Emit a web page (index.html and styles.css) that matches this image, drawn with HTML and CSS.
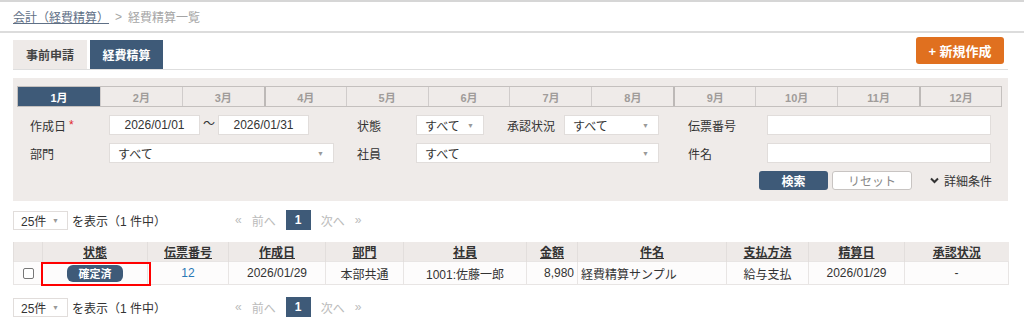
FILE: index.html
```html
<!DOCTYPE html>
<html lang="ja">

<head>
    <meta charset="utf-8">
    <link rel="stylesheet" href="styles.css">
</head>

<body>
    <div class="breadcrumb">
        <a class="crumb-link">会計（経費精算）</a>
        <span class="crumb-sep">&gt;</span>
        <span class="crumb-current">経費精算一覧</span>
    </div>

    <main class="page">
        <div class="tab-bar">
            <a class="tab">事前申請</a>
            <a class="tab active">経費精算</a>
            <a class="new-button">+ 新規作成</a>
        </div>

        <div class="search-panel">
            <div class="months">
                <span class="month active">1月</span>
                <span class="month">2月</span>
                <span class="month">3月</span>
                <span class="month thick">4月</span>
                <span class="month">5月</span>
                <span class="month">6月</span>
                <span class="month">7月</span>
                <span class="month">8月</span>
                <span class="month thick">9月</span>
                <span class="month">10月</span>
                <span class="month">11月</span>
                <span class="month thick">12月</span>
            </div>

            <div class="form-grid">
                <label class="label">作成日 <span class="required">*</span></label>
                <div class="date-range">
                    <span class="field date">2026/01/01</span>
                    <span class="tilde">〜</span>
                    <span class="field date">2026/01/31</span>
                </div>
                <span></span>
                <label class="label">状態</label>
                <div class="inline-fields">
                    <span class="field select status-select">すべて<i class="arrow">▼</i></span>
                    <label class="label approval-label">承認状況</label>
                    <span class="field select approval-select">すべて<i class="arrow">▼</i></span>
                </div>
                <span></span>
                <label class="label">伝票番号</label>
                <span class="field"></span>

                <label class="label">部門</label>
                <span class="field select">すべて<i class="arrow">▼</i></span>
                <span></span>
                <label class="label">社員</label>
                <span class="field select">すべて<i class="arrow">▼</i></span>
                <span></span>
                <label class="label">件名</label>
                <span class="field"></span>
            </div>

            <div class="search-actions">
                <a class="btn btn-search">検索</a>
                <a class="btn btn-reset">リセット</a>
                <a class="detail-toggle"><svg width="9" height="7" viewBox="0 0 9 7"><path d="M1 1.5 L4.5 5 L8 1.5" fill="none" stroke="#333" stroke-width="2"/></svg>詳細条件</a>
            </div>
        </div>

        <div class="pager-row">
            <div class="page-size">
                <span class="field select size-select">25件<i class="arrow">▼</i></span>
                <span>を表示（1 件中）</span>
            </div>
            <div class="pager">
                <span class="pager-link">«</span>
                <span class="pager-link">前へ</span>
                <span class="pager-current">1</span>
                <span class="pager-link">次へ</span>
                <span class="pager-link">»</span>
            </div>
        </div>

        <table class="result-table">
            <colgroup>
                <col style="width:29px">
                <col style="width:105px">
                <col style="width:81px">
                <col style="width:97px">
                <col style="width:78px">
                <col style="width:123px">
                <col style="width:51px">
                <col style="width:149px">
                <col style="width:82px">
                <col style="width:96px">
                <col style="width:104px">
            </colgroup>
            <thead>
                <tr>
                    <th></th>
                    <th><a>状態</a></th>
                    <th><a>伝票番号</a></th>
                    <th><a>作成日</a></th>
                    <th><a>部門</a></th>
                    <th><a>社員</a></th>
                    <th><a>金額</a></th>
                    <th><a>件名</a></th>
                    <th><a>支払方法</a></th>
                    <th><a>精算日</a></th>
                    <th><a>承認状況</a></th>
                </tr>
            </thead>
            <tbody>
                <tr>
                    <td><span class="checkbox"></span></td>
                    <td class="status-cell"><span class="badge">確定済</span></td>
                    <td><a class="slip-link">12</a></td>
                    <td>2026/01/29</td>
                    <td>本部共通</td>
                    <td>1001:佐藤一郎</td>
                    <td class="num">8,980</td>
                    <td class="text-left">経費精算サンプル</td>
                    <td>給与支払</td>
                    <td>2026/01/29</td>
                    <td>-</td>
                </tr>
            </tbody>
        </table>

        <div class="pager-row bottom">
            <div class="page-size">
                <span class="field select size-select">25件<i class="arrow">▼</i></span>
                <span>を表示（1 件中）</span>
            </div>
            <div class="pager">
                <span class="pager-link">«</span>
                <span class="pager-link">前へ</span>
                <span class="pager-current">1</span>
                <span class="pager-link">次へ</span>
                <span class="pager-link">»</span>
            </div>
        </div>
    </main>
</body>

</html>
```

FILE: styles.css
```css
body {
    margin: 0;
    background-color: #fff;
    color: #333;
    font-family: "Liberation Sans", "Noto Sans CJK JP", sans-serif;
    font-size: 12px;
    border-top: 2px solid #d6d6d6;
}

a {
    cursor: pointer;
}

.breadcrumb {
    height: 29px;
    display: flex;
    align-items: center;
    gap: 6px;
    padding-left: 13px;
    border-bottom: 2px solid #dcdcdc;
    font-size: 12px;
}

.crumb-link {
    color: #5f7086;
    text-decoration: underline;
}

.crumb-sep,
.crumb-current {
    color: #a5a5a5;
}

.page {
    margin: 0 16px 0 13px;
}

/* tabs */
.tab-bar {
    display: flex;
    align-items: flex-end;
    gap: 3px;
    margin-top: 2px;
    height: 34px;
    border-bottom: 1px solid #dedede;
}

.tab {
    width: 74px;
    height: 29px;
    display: flex;
    align-items: center;
    justify-content: center;
    background-color: #eeeae8;
    color: #444;
    font-weight: bold;
    font-size: 12px;
}

.tab.active {
    width: 73px;
    background-color: #3e5a78;
    color: #fff;
}

.new-button {
    margin-left: auto;
    margin-right: 4px;
    margin-top: 2px;
    align-self: flex-start;
    width: 88px;
    height: 27px;
    display: flex;
    align-items: center;
    justify-content: center;
    background-color: #e0701f;
    color: #fff;
    font-weight: bold;
    font-size: 13px;
    border-radius: 3px;
}

/* search panel */
.search-panel {
    margin-top: 8px;
    background-color: #efebe9;
    padding: 8px 6px 11px 4px;
}

.months {
    display: grid;
    grid-template-columns: repeat(12, 1fr);
    height: 21px;
    border: 1px solid #c4c0be;
    box-sizing: border-box;
}

.month {
    display: flex;
    align-items: center;
    justify-content: center;
    color: #a09c9a;
    font-weight: bold;
    font-size: 11px;
    border-left: 1px solid #d0cccb;
}

.month:first-child {
    border-left: none;
}

.month.thick {
    border-left: 2px solid #bdb9b7;
}

.month.active {
    background-color: #3e5a78;
    color: #fff;
}

.form-grid {
    display: grid;
    grid-template-columns: 79px 225px 23px 59px 243px 29px 79px 224px;
    grid-auto-rows: 20px;
    row-gap: 8px;
    margin-top: 8px;
    padding-left: 13px;
}

.label {
    display: flex;
    align-items: center;
    font-size: 12px;
    color: #333;
}

.required {
    color: #e0262b;
    margin-left: 3px;
}

.field {
    background-color: #fff;
    border: 1px solid #e1dddb;
    box-sizing: border-box;
    height: 20px;
    display: flex;
    align-items: center;
    font-size: 12px;
    color: #333;
}

.date-range {
    display: flex;
    align-items: center;
}

.field.date {
    width: 91px;
    justify-content: center;
}

.tilde {
    width: 18px;
    text-align: center;
    font-size: 12px;
    margin-top: -6px;
}

.select {
    padding-left: 8px;
    position: relative;
}

.arrow {
    font-style: normal;
    font-size: 7px;
    color: #999;
    margin-left: auto;
    margin-right: 9px;
}

.inline-fields {
    display: flex;
    align-items: center;
}

.status-select {
    width: 68px;
}

.approval-label {
    margin-left: 23px;
    width: 57px;
}

.approval-select {
    width: 95px;
}

.search-actions {
    display: flex;
    justify-content: flex-end;
    align-items: center;
    gap: 4px;
    margin-top: 8px;
    margin-right: 10px;
}

.btn {
    height: 19px;
    display: flex;
    align-items: center;
    justify-content: center;
    box-sizing: border-box;
    border-radius: 3px;
    font-size: 12px;
}

.btn-search {
    width: 69px;
    background-color: #3e5a78;
    color: #fff;
    font-weight: bold;
}

.btn-reset {
    width: 80px;
    background-color: #fff;
    border: 1px solid #c8c4c2;
    color: #888;
}

.detail-toggle {
    margin-left: 14px;
    display: flex;
    align-items: center;
    gap: 5px;
    font-size: 12px;
    color: #333;
}

/* pager */
.pager-row {
    display: flex;
    align-items: center;
    margin-top: 9px;
    height: 20px;
}

.pager-row.bottom {
    margin-top: 12px;
}

.page-size {
    width: 222px;
    display: flex;
    align-items: center;
    gap: 4px;
    font-size: 12px;
}

.size-select {
    width: 55px;
    height: 19px;
    padding-left: 7px;
}

.size-select .arrow {
    margin-right: 8px;
}

.pager {
    display: flex;
    align-items: center;
    gap: 10px;
}

.pager-link {
    color: #bbb;
    font-size: 12px;
}

.pager-current {
    width: 25px;
    height: 20px;
    display: flex;
    align-items: center;
    justify-content: center;
    background-color: #3e5a78;
    color: #fff;
    font-weight: bold;
    font-size: 12px;
}

/* table */
.result-table {
    margin-top: 12px;
    width: 995px;
    table-layout: fixed;
    border-collapse: collapse;
    font-size: 12px;
}

.result-table th {
    height: 19px;
    padding: 0;
    background-color: #eeeae8;
    border-left: 1px solid #e2dedc;
    font-weight: bold;
}

.result-table th a {
    color: #333;
    text-decoration: underline;
}

.result-table td {
    height: 22px;
    padding: 0 3px;
    background-color: #fdfcfc;
    border: 1px solid #e8e5e4;
    text-align: center;
    white-space: nowrap;
}

.result-table td.num {
    text-align: right;
}

.result-table td.text-left {
    text-align: left;
}

.checkbox {
    display: inline-block;
    width: 9px;
    height: 9px;
    border: 1px solid #777;
    border-radius: 2px;
    background: #fff;
    vertical-align: middle;
}

.status-cell {
    position: relative;
}

/* highlight annotation */
.status-cell::after {
    content: "";
    position: absolute;
    left: -2px;
    right: -4px;
    top: 0;
    bottom: -2px;
    border: 2px solid #f00;
}

.badge {
    display: inline-flex;
    align-items: center;
    justify-content: center;
    width: 56px;
    height: 17px;
    background-color: #3e5a78;
    color: #fff;
    font-weight: bold;
    font-size: 11px;
    border-radius: 6px;
}

.slip-link {
    color: #2a78b6;
}
```
